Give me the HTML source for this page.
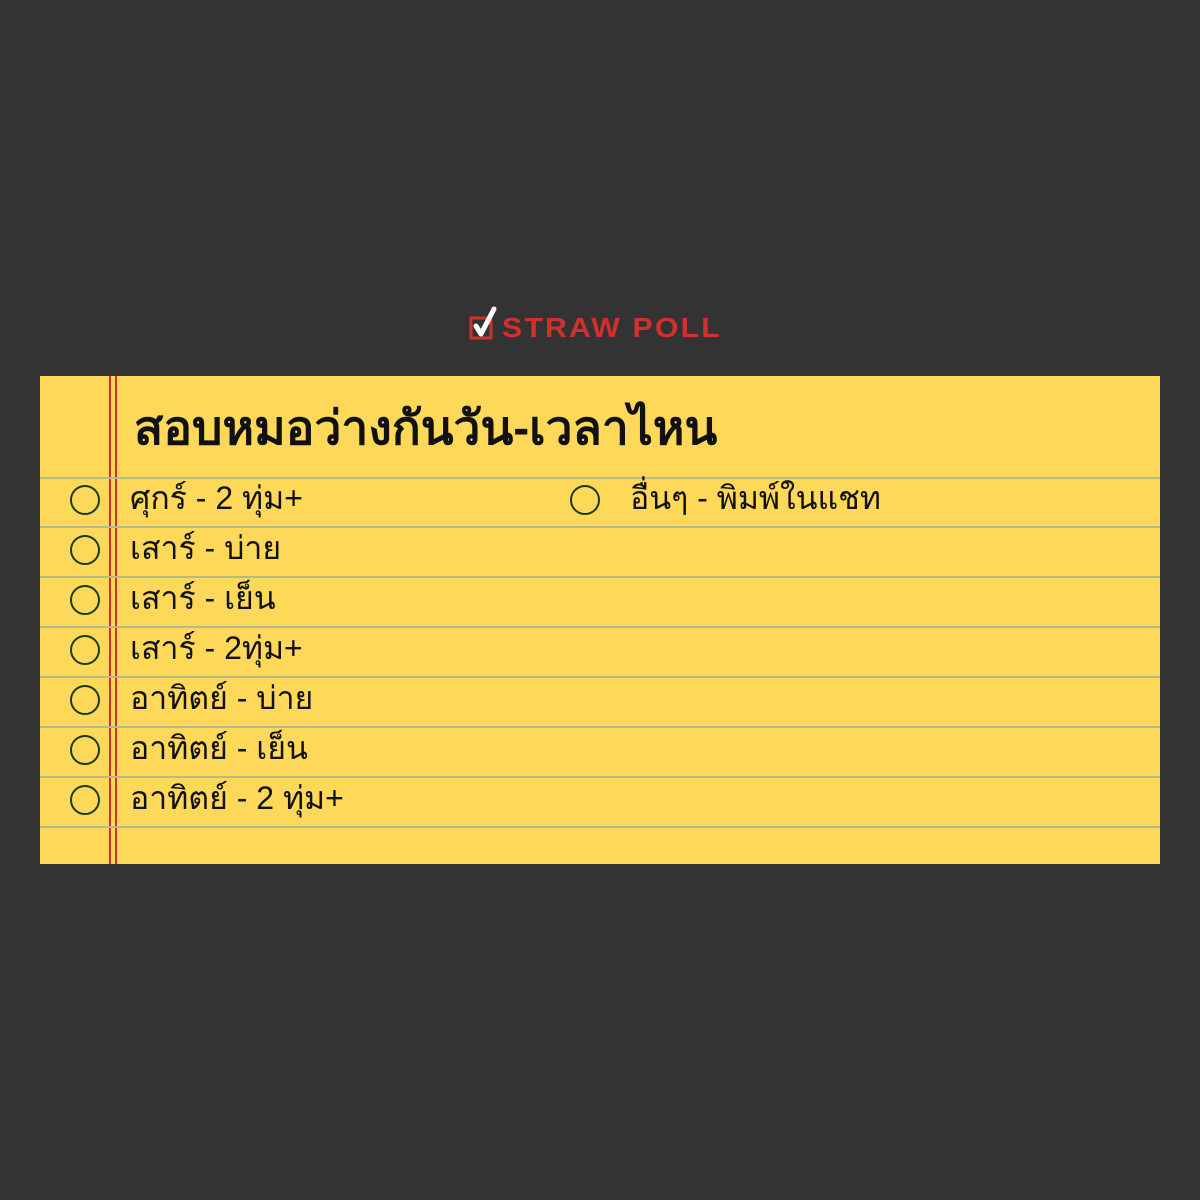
<!DOCTYPE html>
<html><head><meta charset="utf-8"><style>
body{margin:0;width:1200px;height:1200px;background:#333333;position:relative;overflow:hidden;font-family:"Liberation Sans",sans-serif}
.logo{position:absolute;left:469px;top:306px;height:36px;}
.logo .t{position:absolute;left:33px;top:6px;color:#d0312d;font-weight:900;font-size:28px;letter-spacing:2px;font-family:"Liberation Sans",sans-serif;white-space:nowrap;transform:scaleX(1.08);transform-origin:left}
.paper{position:absolute;left:40px;top:376px;width:1120px;height:488px;background:#fed858}
.hl{position:absolute;left:0;width:1120px;height:2px;background:#b5bb86}
.vl{position:absolute;top:0;height:488px;width:2px;background:#d0312d}
.title{position:absolute;left:94px;top:14px;font-size:47px;font-weight:bold;color:#111;transform:scaleX(1.02);transform-origin:left}
.c{position:absolute;width:26px;height:26px;border:2px solid #1b3a14;border-radius:50%}
.o{position:absolute;font-size:32px;color:#111;white-space:nowrap}
</style></head><body>
<div class="logo">
<svg width="34" height="36" viewBox="0 0 34 36"><rect x="2" y="12" width="20" height="20" fill="none" stroke="#d0312d" stroke-width="3"/><path d="M7 20 L12 28 L25 3" fill="none" stroke="#fff" stroke-width="5" stroke-linecap="round" stroke-linejoin="round"/></svg>
<div class="t">STRAW POLL</div></div>
<div class="paper">
<div class="vl" style="left:69px"></div><div class="vl" style="left:75px"></div>
<div class="title">สอบหมอว่างกันวัน-เวลาไหน</div>
<div class="hl" style="top:101px"></div><div class="hl" style="top:150px"></div><div class="hl" style="top:200px"></div><div class="hl" style="top:250px"></div><div class="hl" style="top:300px"></div><div class="hl" style="top:350px"></div><div class="hl" style="top:400px"></div><div class="hl" style="top:450px"></div>
<div class="c" style="left:30px;top:109px"></div><div class="o" style="left:90px;top:97px">ศุกร์ - 2 ทุ่ม+</div>
<div class="c" style="left:30px;top:159px"></div><div class="o" style="left:90px;top:147px">เสาร์ - บ่าย</div>
<div class="c" style="left:30px;top:209px"></div><div class="o" style="left:90px;top:197px">เสาร์ -  เย็น</div>
<div class="c" style="left:30px;top:259px"></div><div class="o" style="left:90px;top:247px">เสาร์ - 2ทุ่ม+</div>
<div class="c" style="left:30px;top:309px"></div><div class="o" style="left:90px;top:297px">อาทิตย์ - บ่าย</div>
<div class="c" style="left:30px;top:359px"></div><div class="o" style="left:90px;top:347px">อาทิตย์ - เย็น</div>
<div class="c" style="left:30px;top:409px"></div><div class="o" style="left:90px;top:397px">อาทิตย์ - 2 ทุ่ม+</div>
<div class="c" style="left:530px;top:109px"></div><div class="o" style="left:590px;top:97px">อื่นๆ - พิมพ์ในแชท</div>
</div>
</body></html>
